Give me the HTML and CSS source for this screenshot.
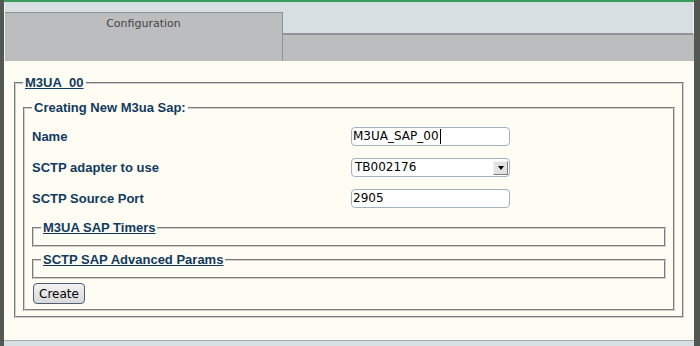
FILE: index.html
```html
<!DOCTYPE html>
<html>
<head>
<meta charset="utf-8">
<title>Configuration</title>
<link rel="stylesheet" href="styles.css">
</head>
<body>
<div class="window">
  <div class="edge edge-left"></div>
  <div class="main">
    <div class="topline"></div>
    <div class="tabbar">
      <div class="tabcol"><div class="tab">Configuration</div></div>
      <div class="tabrest"><div class="tabrest-top"></div></div>
    </div>
    <div class="content">
      <fieldset class="box outer">
        <legend class="link">M3UA_00</legend>
        <fieldset class="box inner">
          <legend>Creating New M3ua Sap:</legend>
          <div class="form">
            <div class="label">Name</div>
            <div class="cell"><div class="field">M3UA_SAP_00<span class="caret"></span></div></div>
            <div class="label">SCTP adapter to use</div>
            <div class="cell"><div class="field select">TB002176<span class="drop"><span class="tri"></span></span></div></div>
            <div class="label">SCTP Source Port</div>
            <div class="cell"><div class="field">2905</div></div>
          </div>
          <fieldset class="box sub"><legend class="link">M3UA SAP Timers</legend></fieldset>
          <fieldset class="box sub"><legend class="link">SCTP SAP Advanced Params</legend></fieldset>
          <button class="btn" type="button">Create</button>
        </fieldset>
      </fieldset>
    </div>
    <div class="footer"></div>
  </div>
  <div class="edge edge-right"></div>
</div>
</body>
</html>
```
FILE: styles.css
```css
html, body {
  margin: 0;
  padding: 0;
}
body {
  width: 700px;
  height: 346px;
  overflow: hidden;
  background: #fffcf3;
}
.window {
  display: flex;
  height: 346px;
}
.edge {
  background: #525953;
}
.edge-left { width: 4px; }
.edge-right { width: 6px; }
.main {
  flex: 1;
  display: flex;
  flex-direction: column;
  min-width: 0;
}
.topline {
  height: 2px;
  background: #3a9d5c;
}
.tabbar {
  display: flex;
  height: 59px;
  background: #bcbdbf;
}
.tabcol {
  width: 279px;
  display: flex;
  flex-direction: column;
  padding-top: 10px;
  background: #d8dfe3;
  border-left: 1px solid #eef2f4;
  box-sizing: border-box;
}
.tab {
  flex: 1;
  background: #bcbdbf;
  border-top: 1px solid #8e9396;
  border-right: 1px solid #8e9396;
  text-align: center;
  font-family: "DejaVu Sans", sans-serif;
  font-size: 11px;
  color: #444;
  padding-top: 4px;
}
.tabrest {
  flex: 1;
}
.tabrest-top {
  height: 31px;
  background: #d8dfe3;
  border-bottom: 2px solid #8e9396;
  border-right: 1px solid #eef2f4;
}
.content {
  flex: 1;
  background: #fffcf3;
  padding-top: 14px;
}
.footer {
  height: 5px;
  background: #d8dfe3;
  border-top: 1px solid #a4abaf;
}
.box {
  border: 2px groove #cfcfcf;
  margin: 0;
  min-width: 0;
}
legend {
  padding: 0 2px;
  font-family: "Liberation Sans", Arial, sans-serif;
  font-weight: bold;
  font-size: 13px;
  color: #103a5e;
  line-height: 15px;
}
.link {
  text-decoration: underline;
}
.outer {
  margin: 0 10px;
  padding: 10px 7px 5px 7px;
}
.inner {
  padding: 5px 7px 5px 7px;
}
.form {
  display: grid;
  grid-template-columns: 319px 1fr;
  grid-auto-rows: 31px;
  padding-top: 1px;
  margin-bottom: -1px;
}
.label {
  font-family: "Liberation Sans", Arial, sans-serif;
  font-weight: bold;
  font-size: 13px;
  color: #103a5e;
  display: flex;
  align-items: center;
}
.cell {
  display: flex;
  align-items: center;
}
.field {
  position: relative;
  width: 159px;
  height: 19px;
  box-sizing: border-box;
  border: 1px solid #a3b2c1;
  border-radius: 4px;
  background: #fff;
  font-family: "DejaVu Sans", sans-serif;
  font-size: 12px;
  line-height: 17px;
  padding: 0 1px;
  color: #000;
  display: flex;
  align-items: center;
}
.caret {
  display: inline-block;
  width: 1px;
  height: 15px;
  background: #000;
  margin-left: 1px;
}
.select {
  padding-left: 3px;
}
.drop {
  position: absolute;
  right: 1px;
  top: 2px;
  width: 15px;
  height: 14px;
  box-sizing: border-box;
  background: #e2e2e2;
  border-top: 1px solid #f4f4f4;
  border-left: 1px solid #f4f4f4;
  border-right: 1px solid #7d7d7d;
  border-bottom: 1px solid #7d7d7d;
  display: flex;
  align-items: center;
  justify-content: center;
}
.tri {
  width: 0;
  height: 0;
  border-left: 3px solid transparent;
  border-right: 3px solid transparent;
  border-top: 4px solid #000;
}
.sub {
  margin-top: 7px;
  padding: 5px 7px 5px 7px;
}
.sub + .sub {
  margin-top: 5px;
}
.btn {
  display: block;
  margin-top: 4px;
  margin-left: 1px;
  width: 52px;
  height: 21px;
  padding: 0;
  border: 1px solid #4e5f73;
  border-radius: 4px;
  background: linear-gradient(#f2f2f2, #d9d9d9);
  font-family: "DejaVu Sans", sans-serif;
  font-size: 12px;
  color: #000;
}
```
